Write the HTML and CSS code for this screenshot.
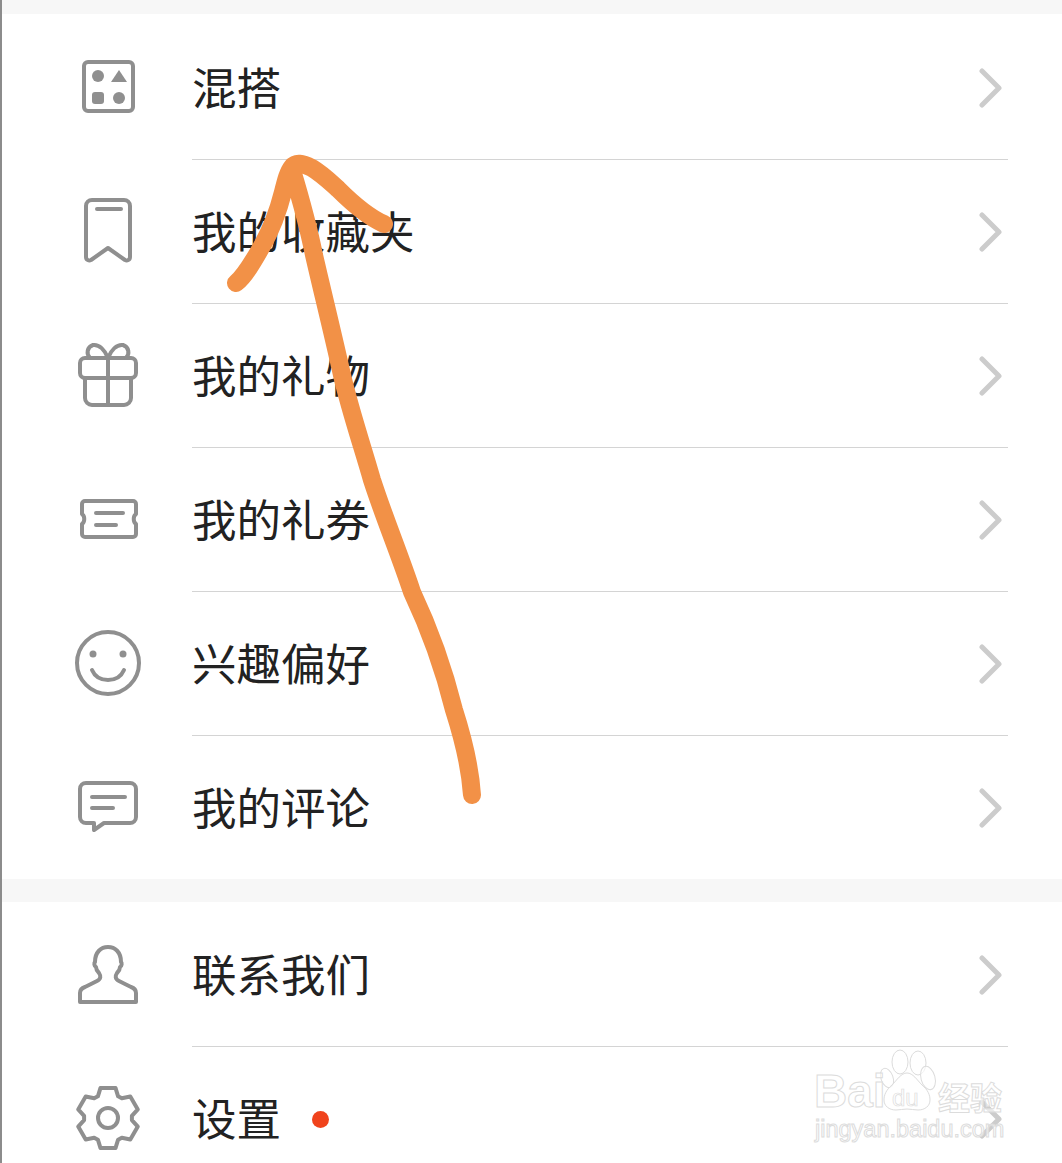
FILE: index.html
```html
<!DOCTYPE html>
<html lang="zh-CN">
<head>
<meta charset="utf-8">
<title>我的</title>
<link rel="stylesheet" href="styles.css">
</head>
<body>
<main class="page">
  <section class="group group-first">
    <div class="row">
      <svg class="icon" viewBox="0 0 72 72"><rect class="ln" x="12" y="10" width="49" height="49" rx="4"/><circle class="fl" cx="26" cy="24" r="6"/><path class="fl" d="M47 18l8 12H39z"/><rect class="fl" x="20" y="40" width="12" height="12" rx="3"/><circle class="fl" cx="47" cy="46" r="6"/></svg>
      <div class="body"><span class="label">混搭</span><svg class="chev" viewBox="0 0 24 40"><path d="M3 3l17 17L3 37"/></svg></div>
    </div>
    <div class="row">
      <svg class="icon" viewBox="0 0 72 72"><path class="ln" d="M20 4h32a6 6 0 0 1 6 6v51c0 3-3 4-5 3L36 52 19 64c-2 1-5 0-5-3V10a6 6 0 0 1 6-6z"/><path class="ln" d="M25 13h24"/></svg>
      <div class="body"><span class="label">我的收藏夹</span><svg class="chev" viewBox="0 0 24 40"><path d="M3 3l17 17L3 37"/></svg></div>
    </div>
    <div class="row">
      <svg class="icon" viewBox="0 0 72 72"><rect class="ln" x="8" y="18" width="56" height="20" rx="5"/><path class="ln" d="M13 38v20a7 7 0 0 0 7 7h32a7 7 0 0 0 7-7V38M36 18v47"/><path class="ln" d="M36 18c-3-8-9-14-15-13-6 2-7 9-3 13M36 18c3-8 9-14 15-13 6 2 7 9 3 13"/></svg>
      <div class="body"><span class="label">我的礼物</span><svg class="chev" viewBox="0 0 24 40"><path d="M3 3l17 17L3 37"/></svg></div>
    </div>
    <div class="row">
      <svg class="icon" viewBox="0 0 72 72"><path class="ln" d="M13 17h48a3 3 0 0 1 3 3v10c-3 2-3 8 0 10v10a3 3 0 0 1-3 3H13a3 3 0 0 1-3-3V40c3-2 3-8 0-10V20a3 3 0 0 1 3-3z"/><path class="ln" d="M24 29h27M24 41h20"/></svg>
      <div class="body"><span class="label">我的礼券</span><svg class="chev" viewBox="0 0 24 40"><path d="M3 3l17 17L3 37"/></svg></div>
    </div>
    <div class="row">
      <svg class="icon" viewBox="0 0 72 72"><circle class="ln" cx="36" cy="35" r="31"/><circle class="fl" cx="21" cy="26" r="3.5"/><circle class="fl" cx="51" cy="26" r="3.5"/><path class="ln" d="M20 42c3 7 9 10 16 10s13-3 16-10"/></svg>
      <div class="body"><span class="label">兴趣偏好</span><svg class="chev" viewBox="0 0 24 40"><path d="M3 3l17 17L3 37"/></svg></div>
    </div>
    <div class="row row-last">
      <svg class="icon" viewBox="0 0 72 72"><path class="ln" d="M14 11h44a6 6 0 0 1 6 6v28a6 6 0 0 1-6 6H32l-10 7v-7h-8a6 6 0 0 1-6-6V17a6 6 0 0 1 6-6z"/><path class="ln" d="M20 25h33M20 36h21"/></svg>
      <div class="body"><span class="label">我的评论</span><svg class="chev" viewBox="0 0 24 40"><path d="M3 3l17 17L3 37"/></svg></div>
    </div>
  </section>
  <section class="group group-second">
    <div class="row">
      <svg class="icon" viewBox="0 0 72 72"><path class="ln" d="M8 62V53c0-3 2-5 5-6l12-6c4-2 4-5 2-8-2-2-3-3-3-6-2-1-2-4-1-5 0-10 6-15 13-15s13 5 13 15c1 1 1 4-1 5 0 3-1 4-3 6-2 3-2 6 2 8l12 6c3 1 5 3 5 6v9z"/></svg>
      <div class="body"><span class="label">联系我们</span><svg class="chev" viewBox="0 0 24 40"><path d="M3 3l17 17L3 37"/></svg></div>
    </div>
    <div class="row row-last">
      <svg class="icon" viewBox="0 0 72 72"><path class="ln" d="M43.5 4.9L46.1 13.3 49.8 15.3 58.3 13.5 65.8 26.4 59.9 32.9V37.1L65.8 43.6 58.3 56.5 49.8 54.7 46.1 56.7 43.5 65.1H28.5L25.9 56.7 22.2 54.7 13.7 56.5 6.2 43.6 12.1 37.1V32.9L6.2 26.4 13.7 13.5 22.2 15.3 25.9 13.3 28.5 4.9z"/><circle class="ln" cx="36" cy="35" r="10"/></svg>
      <div class="body"><span class="label">设置</span><i class="dot"></i><svg class="chev" viewBox="0 0 24 40"><path d="M3 3l17 17L3 37"/></svg></div>
    </div>
  </section>

  <svg class="arrow" viewBox="0 0 1062 1163"><path d="M472 795C470 765 462 735 454 710 444 670 430 630 412 592 398 550 385 520 372 480 362 445 350 410 342 375 332 330 322 290 314 255 307 220 298 190 292 170M236 283C245 276 254 260 262 246 272 228 278 212 283 192 286 180 288 172 292 167 296 162 302 163 312 168 322 174 328 180 338 189 350 201 366 216 384 224"/></svg>

  <div class="mark">
    <svg class="paw" viewBox="0 0 60 64"><ellipse cx="8" cy="29" rx="6" ry="10" transform="rotate(-20 8 29)"/><ellipse cx="21" cy="13" rx="8" ry="12"/><ellipse cx="39" cy="14" rx="8" ry="12"/><ellipse cx="49" cy="29" rx="7" ry="12" transform="rotate(-15 49 29)"/><path d="M28 24c-6 0-10 7-15 12-6 5-8 10-8 15 0 6 5 10 12 10 4 0 7-1 11-1s7 1 11 1c7 0 12-4 12-10 0-5-2-10-8-15-5-5-9-12-15-12z"/></svg>
    <span class="mark-bai">Bai</span>
    <span class="mark-du">du</span>
    <span class="mark-cn">经验</span>
    <span class="mark-url">jingyan.baidu.com</span>
  </div>
</main>
</body>
</html>
```
FILE: styles.css
```css
* { box-sizing: border-box; }
html, body { margin: 0; padding: 0; background: #fff; }
body { width: 1062px; height: 1163px; overflow: hidden; }
.page {
  position: relative;
  width: 1062px;
  height: 1163px;
  overflow: hidden;
  background: #f7f7f7;
  padding-top: 14px;
  font-family: "Noto Sans CJK SC", "Noto Sans", sans-serif;
  color: #222;
}
.page::before {
  content: "";
  position: absolute;
  left: 0;
  top: 0;
  bottom: 0;
  width: 1.5px;
  background: #8c8c8c;
}
.group { background: #fff; }
.group-first { padding-top: 2px; height: 865px; margin-bottom: 23px; }
.group-second { padding-top: 2px; height: 261px; }
.row {
  display: flex;
  align-items: stretch;
  height: 144px;
  padding: 0 54px 0 72px;
}
.icon { flex: none; width: 72px; height: 72px; align-self: center; margin-right: 48px; }
.ln { fill: none; stroke: #8f8f8f; stroke-width: 4; stroke-linecap: round; stroke-linejoin: round; }
.fl { fill: #8f8f8f; }
.body {
  flex: 1;
  display: flex;
  align-items: center;
  border-bottom: 1px solid #d4d4d4;
}
.row-last .body { border-bottom: 0; }
.label { font-size: 44.5px; line-height: 60px; white-space: nowrap; padding: 0 0 4px 0; }
.chev { flex: none; width: 24px; height: 40px; margin-left: auto; margin-right: 5px; }
.chev path { fill: none; stroke: #cccccc; stroke-width: 5; stroke-linecap: round; stroke-linejoin: round; }
.dot { width: 17px; height: 17px; border-radius: 50%; background: #f0431c; margin-left: 31px; }
.group-second .row:first-child { height: 143px; }
.arrow { position: absolute; left: 0; top: 0; width: 1062px; height: 1163px; pointer-events: none; }
.arrow path { fill: none; stroke: #f29147; stroke-width: 18; stroke-linecap: round; stroke-linejoin: round; }
.mark { position: absolute; left: 812px; top: 1048px; width: 196px; height: 96px; pointer-events: none; }
.mark span { position: absolute; white-space: nowrap; color: rgba(255,255,255,.6); -webkit-text-stroke: 1px #dcdcdc; font-family: "Liberation Sans", sans-serif; }
.paw { position: absolute; left: 67px; top: 1px; width: 60px; height: 64px; }
.paw ellipse, .paw path { fill: rgba(255,255,255,.6); stroke: #dcdcdc; stroke-width: 1; }
.mark-bai { left: 2px; top: 20px; font-size: 46px; line-height: 46px; font-weight: 700; }
.mark .mark-du { left: 80px; top: 38px; font-size: 24px; line-height: 24px; -webkit-text-stroke-width: .7px; }
.mark .mark-cn { left: 126px; top: 30px; font-size: 32px; line-height: 36px; font-weight: 700; font-family: "Noto Sans CJK SC", sans-serif; }
.mark-url { left: 3px; top: 68px; font-size: 23.500px; line-height: 27px; }
```
